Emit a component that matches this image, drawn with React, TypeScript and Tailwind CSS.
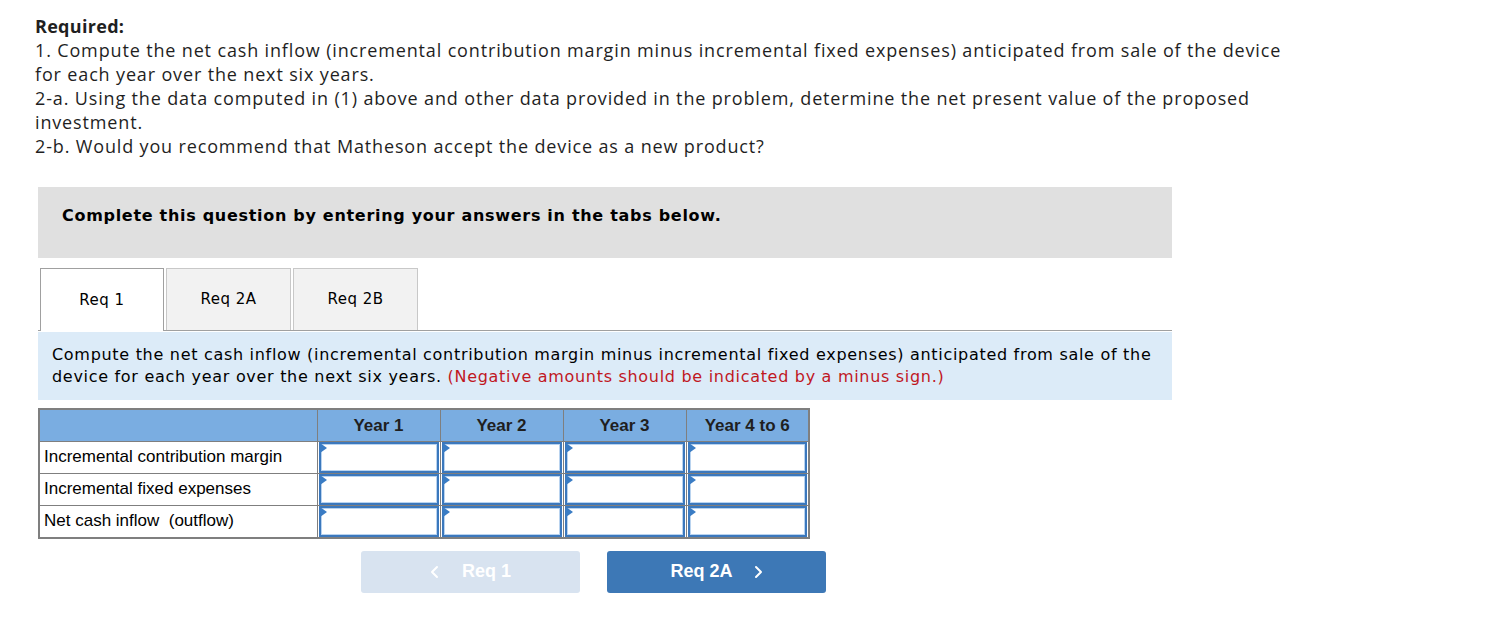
import React from 'react';

const years = ['Year 1', 'Year 2', 'Year 3', 'Year 4 to 6'];
const rows = ['Incremental contribution margin', 'Incremental fixed expenses', 'Net cash inflow  (outflow)'];

const AnswerCell = () => (
  <td className="border border-[#7f7f7f] p-0 h-[32px]">
    <div className="relative h-[31px] mx-[1px] border-2 border-[#3b78bd] bg-white">
      <div className="absolute inset-0 border border-[#b9d3ef]" />
      <div className="absolute left-[-1px] top-[-1px] w-0 h-0 border-t-[5px] border-b-[5px] border-l-[7px] border-t-transparent border-b-transparent border-l-[#3a7cc4]" />
    </div>
  </td>
);

const Chevron = ({ dir }: { dir: 'left' | 'right' }) => (
  <svg width="10" height="14" viewBox="0 0 10 14" fill="none" stroke="currentColor" strokeWidth="2" strokeLinecap="round" strokeLinejoin="round">
    {dir === 'left' ? <path d="M7 2 L2 7 L7 12" /> : <path d="M3 2 L8 7 L3 12" />}
  </svg>
);

export default function App() {
  return (
    <div className="bg-white min-h-screen pl-[35px] pt-[14px] pb-10">
      <div className="font-['Open_Sans',sans-serif] text-[18px] leading-[24px] tracking-[0.85px] text-[#1f1f1f] w-[1260px]">
        <p className="font-bold tracking-[0.3px]">Required:</p>
        <p>1. Compute the net cash inflow (incremental contribution margin minus incremental fixed expenses) anticipated from sale of the device for each year over the next six years.</p>
        <p>2-a. Using the data computed in (1) above and other data provided in the problem, determine the net present value of the proposed investment.</p>
        <p>2-b. Would you recommend that Matheson accept the device as a new product?</p>
      </div>

      <div className="ml-[3px] w-[1134px] mt-[29px] font-['DejaVu_Sans','Verdana',sans-serif]">
        <div className="bg-[#e0e0e0] h-[71px] pl-[24px] pt-[17px]">
          <p className="text-[16px] font-bold text-black tracking-[0.7px]">Complete this question by entering your answers in the tabs below.</p>
        </div>

        <div className="mt-[10px] flex items-end border-b border-[#a0a0a0] h-[63px] tracking-[0.5px]">
          <div className="ml-[2px] w-[124px] h-[63px] bg-white border border-b-0 border-[#a0a0a0] flex items-center justify-center text-[15px] text-black -mb-px">Req 1</div>
          <div className="ml-[2px] w-[125px] h-[62px] bg-[#f2f2f2] border border-b-0 border-[#c8c8c8] flex items-center justify-center text-[15px] text-black">Req 2A</div>
          <div className="ml-[2px] w-[125px] h-[62px] bg-[#f2f2f2] border border-b-0 border-[#c8c8c8] flex items-center justify-center text-[15px] text-black">Req 2B</div>
        </div>

        <div className="mt-[1px] bg-[#dcebf8] h-[68px] pl-[14px] pr-[4px] pt-[12px] text-[16px] leading-[22px] tracking-[0.7px] text-black">
          Compute the net cash inflow (incremental contribution margin minus incremental fixed expenses) anticipated from sale of the device for each year over the next six years.{' '}
          <span className="text-[#c0171f]">(Negative amounts should be indicated by a minus sign.)</span>
        </div>

        <table className="mt-[8px] border-collapse border-2 border-[#7f7f7f] font-['Liberation_Sans',Arial,sans-serif] text-[17px] text-black">
          <thead>
            <tr className="bg-[#7aade1] h-[32px]">
              <th className="w-[278px] border border-[#7f7f7f]" />
              {years.map((y) => (
                <th key={y} className="w-[123px] border border-[#7f7f7f] font-bold text-[#1f1f1f]">{y}</th>
              ))}
            </tr>
          </thead>
          <tbody>
            {rows.map((r) => (
              <tr key={r}>
                <td className="border border-[#7f7f7f] px-[4px] h-[32px] whitespace-pre">{r}</td>
                {years.map((y) => (
                  <AnswerCell key={y} />
                ))}
              </tr>
            ))}
          </tbody>
        </table>

        <div className="mt-[12px] ml-[323px] flex gap-[27px] font-['Liberation_Sans',Arial,sans-serif]">
          <button className="w-[219px] h-[42px] rounded-[3px] bg-[#d8e3f0] text-white font-bold text-[18px] flex items-center justify-center gap-[22px]">
            <Chevron dir="left" />
            <span>Req 1</span>
          </button>
          <button className="w-[219px] h-[42px] rounded-[3px] bg-[#3d78b6] text-white font-bold text-[18px] flex items-center justify-center gap-[20px]">
            <span>Req 2A</span>
            <Chevron dir="right" />
          </button>
        </div>
      </div>
    </div>
  );
}
